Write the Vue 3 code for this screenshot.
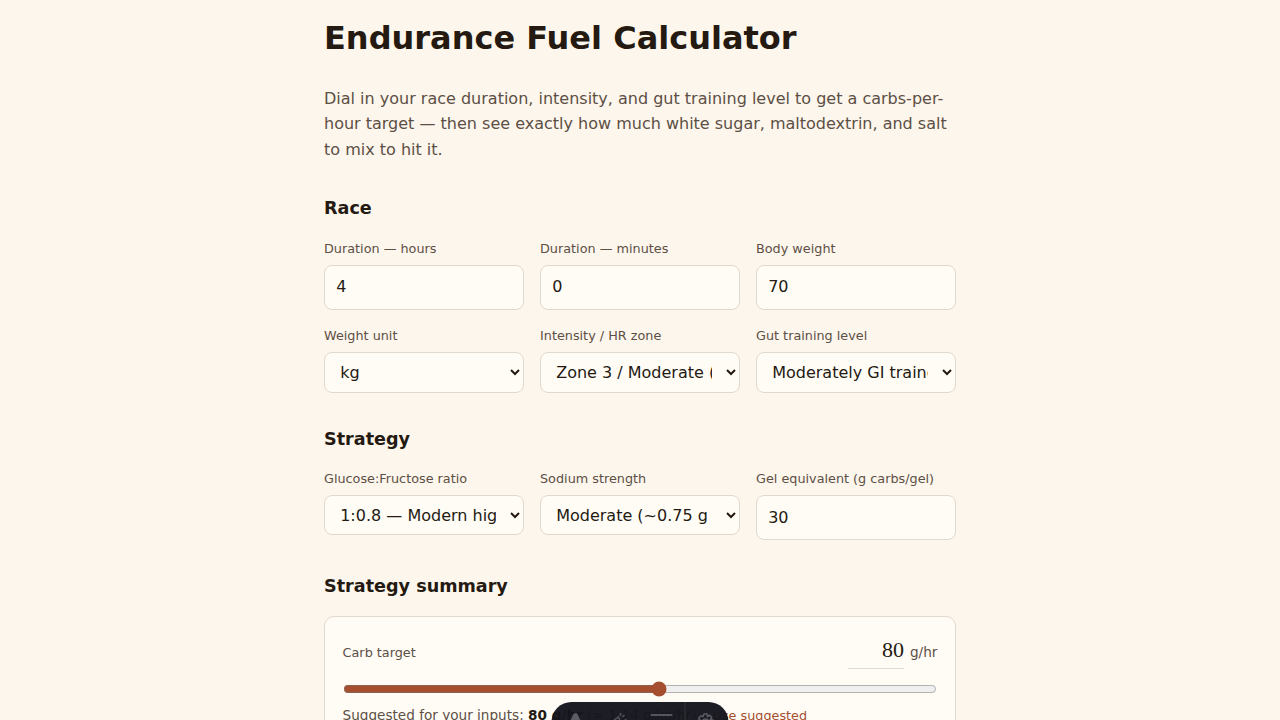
<script setup>
import { ref } from "vue";

const hours = ref(4);
const minutes = ref(0);
const weight = ref(70);
const unit = ref("kg");
const zone = ref("z3");
const gut = ref("moderate");
const ratio = ref("0.8");
const sodium = ref("moderate");
const gel = ref(30);
const carbs = ref(80);
</script>

<template>
  <main class="page">
    <h1>Endurance Fuel Calculator</h1>
    <p class="lede">
      Dial in your race duration, intensity, and gut training level to get a carbs-per-hour
      target — then see exactly how much white sugar, maltodextrin, and salt to mix to hit it.
    </p>

    <h2>Race</h2>
    <div class="fields">
      <label class="field">
        <span>Duration — hours</span>
        <input v-model="hours" type="number" />
      </label>
      <label class="field">
        <span>Duration — minutes</span>
        <input v-model="minutes" type="number" />
      </label>
      <label class="field">
        <span>Body weight</span>
        <input v-model="weight" type="number" />
      </label>
      <label class="field">
        <span>Weight unit</span>
        <select v-model="unit">
          <option value="kg">kg</option>
          <option value="lb">lb</option>
        </select>
      </label>
      <label class="field">
        <span>Intensity / HR zone</span>
        <select v-model="zone">
          <option value="z2">Zone 2 / Easy (conversational)</option>
          <option value="z3">Zone 3 / Moderate (steady)</option>
          <option value="z4">Zone 4 / Hard (threshold)</option>
        </select>
      </label>
      <label class="field">
        <span>Gut training level</span>
        <select v-model="gut">
          <option value="low">Untrained gut</option>
          <option value="moderate">Moderately GI trained</option>
          <option value="high">Highly GI trained</option>
        </select>
      </label>
    </div>

    <h2>Strategy</h2>
    <div class="fields">
      <label class="field">
        <span>Glucose:Fructose ratio</span>
        <select v-model="ratio">
          <option value="0.5">1:0.5 — Classic 2:1</option>
          <option value="0.8">1:0.8 — Modern high-carb</option>
        </select>
      </label>
      <label class="field">
        <span>Sodium strength</span>
        <select v-model="sodium">
          <option value="light">Light (~0.5 g salt/L)</option>
          <option value="moderate">Moderate (~0.75 g salt/L)</option>
        </select>
      </label>
      <label class="field">
        <span>Gel equivalent (g carbs/gel)</span>
        <input v-model="gel" type="number" class="gel-input" />
      </label>
    </div>

    <h2>Strategy summary</h2>
    <section class="card">
      <div class="target-row">
        <span class="target-label">Carb target</span>
        <span class="target-value">
          <input v-model="carbs" type="number" class="target-input" />
          <span>g/hr</span>
        </span>
      </div>
      <input v-model="carbs" type="range" min="0" max="150" class="slider" />
      <p class="hint">
        <span>Suggested for your inputs: <strong>80 g/hr</strong> (≈ 1.14 g/kg/hr)</span>
        <a class="use-link">Use suggested</a>
      </p>
    </section>
  </main>

  <!-- 하단 고정 툴바 -->
  <nav class="toolbar">
    <span class="tool tool-logo">
      <svg viewBox="0 0 20 20" width="20" height="20"><path d="M8 2c.5-1 3.500-1 4 0l6 13c-2-1-5-1.500-6-1.500l-2 4-2-4c-1 0-4 .5-6 1.500z" fill="#5c5c64" /></svg>
    </span>
    <span class="tool tool-audit">
      <svg viewBox="0 0 20 20" width="20" height="20" fill="none" stroke="#54545c" stroke-width="1.500"><path d="M3 10l7-5 2 5 5-2-4 8H6z" /><path d="M12 1v3M16 3l-2 2" /></svg>
    </span>
    <span class="tool tool-menu">
      <svg viewBox="0 0 22 20" width="22" height="20" fill="none" stroke="#6a6a72" stroke-width="1.500"><path d="M0 3h22M0 9h22M0 15h22" /></svg>
    </span>
    <span class="tool tool-settings">
      <svg viewBox="0 0 20 20" width="20" height="20" fill="none" stroke="#5c5c64" stroke-width="1.500"><circle cx="10" cy="10" r="3" /><path d="M8.500 2h3l.5 2.500 2.200-1.200 2 2-1.200 2.200 2.500.5v3l-2.500.5 1.200 2.200-2 2-2.200-1.200-.5 2.500h-3l-.5-2.500-2.200 1.200-2-2 1.200-2.200L2 11.500v-3l2.500-.5-1.200-2.200 2-2L7.500 4.500z" /></svg>
    </span>
  </nav>
</template>

<style>
html,
body {
  background: #fdf6ec;
}
</style>

<style scoped>
.page {
  box-sizing: border-box;
  max-width: 680px;
  margin: 0 auto;
  padding: 0 24px 120px;
  font-family: "DejaVu Sans", sans-serif;
  color: #241a12;
}

h1 {
  margin: 0;
  padding-top: 16px;
  font-size: 32px;
  line-height: 44px;
  font-weight: 700;
}

.lede {
  margin: 25.6px 0 0;
  font-size: 16px;
  line-height: 25.6px;
  color: #5c4f45;
}

h2 {
  margin: 34px 0 0;
  font-size: 17.6px;
  line-height: 24px;
  font-weight: 700;
}

.fields {
  display: grid;
  grid-template-columns: repeat(3, 1fr);
  gap: 17.6px 16px;
  margin-top: 19.6px;
}

.field {
  display: flex;
  flex-direction: column;
  gap: 8px;
  min-width: 0;
}

.field > span {
  font-size: 12.8px;
  line-height: 17px;
  color: #5c4f45;
}

.field input,
.field select {
  box-sizing: border-box;
  width: 100%;
  border: 1px solid #e2d9ce;
  border-radius: 8px;
  background: #fffcf6;
  color: #241a12;
  font-family: inherit;
  font-size: 16px;
}

.field input {
  height: 44.8px;
  padding: 9px 11.2px 11px;
}

.field .gel-input {
  padding: 10px 11.2px;
}

.field select {
  height: 40.2px;
  padding: 8px 11.2px;
}

.card {
  margin-top: 18px;
  padding: 17.6px;
  border: 1px solid #e2d9ce;
  border-radius: 10px;
  background: #fffcf6;
}

.target-row {
  display: flex;
  align-items: center;
  justify-content: space-between;
}

.target-label {
  padding-top: 2px;
  font-size: 12.8px;
  color: #5c4f45;
}

.target-value {
  display: flex;
  align-items: center;
  gap: 6px;
  font-size: 13.6px;
  color: #5c4f45;
}

.target-input {
  box-sizing: border-box;
  width: 56px;
  height: 34px;
  padding: 0 0 2px;
  border: none;
  border-bottom: 1px solid #e2d9ce;
  background: transparent;
  color: #241a12;
  font-family: "Liberation Serif", serif;
  font-size: 22px;
  text-align: right;
  outline: none;
  appearance: textfield;
}

.target-input::-webkit-inner-spin-button,
.target-input::-webkit-outer-spin-button {
  appearance: none;
  margin: 0;
}

.slider {
  display: block;
  width: 100%;
  margin: 12px 0 0;
  accent-color: #a54f2f;
}

.hint {
  display: flex;
  align-items: baseline;
  gap: 16px;
  margin: 10px 0 0;
  font-size: 13.6px;
  color: #5c4f45;
}

.hint strong {
  color: #241a12;
}

.use-link {
  font-size: 12.8px;
  color: #a54f2f;
}

.toolbar {
  position: fixed;
  left: 50%;
  bottom: -22px;
  display: flex;
  align-items: center;
  height: 40px;
  transform: translateX(-50%);
  border-radius: 20px;
  background: rgba(20, 21, 28, 0.96);
}

.tool {
  display: flex;
  align-items: center;
  justify-content: center;
  height: 40px;
}

.tool-logo {
  width: 46px;
  padding-left: 2px;
  box-sizing: border-box;
}

.tool-audit {
  width: 41px;
}

.tool-menu {
  width: 46px;
}

.tool-settings {
  width: 44px;
  box-sizing: border-box;
  padding-right: 4px;
  border-left: 1px solid #34343b;
}
</style>
